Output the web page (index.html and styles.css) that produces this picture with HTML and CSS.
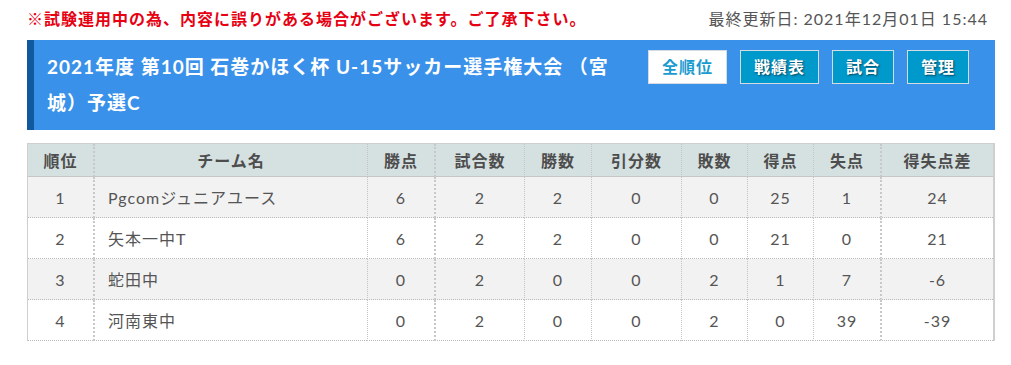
FILE: index.html
```html
<!DOCTYPE html>
<html lang="ja">
<head>
<meta charset="utf-8">
<title>順位表</title>
<link rel="stylesheet" href="styles.css">
</head>
<body>
<div class="page">
  <div class="topline">
    <p class="notice">※試験運用中の為、内容に誤りがある場合がございます。ご了承下さい。</p>
    <p class="updated">最終更新日: 2021年12月01日 15:44</p>
  </div>
  <div class="titlebar">
    <h1 class="title">2021年度 第10回 石巻かほく杯 U-15サッカー選手権大会 （宮城）予選C</h1>
    <nav class="tabs">
      <a class="tab tab-active">全順位</a>
      <a class="tab">戦績表</a>
      <a class="tab">試合</a>
      <a class="tab">管理</a>
    </nav>
  </div>
  <table class="standings">
    <colgroup>
      <col class="c-rank"><col class="c-team"><col class="c-pts"><col class="c-wide">
      <col class="c-pts"><col class="c-wide"><col class="c-num"><col class="c-num">
      <col class="c-pts"><col class="c-diff">
    </colgroup>
    <thead>
      <tr>
        <th>順位</th><th class="sep">チーム名</th><th>勝点</th><th class="sep">試合数</th><th>勝数</th><th>引分数</th><th>敗数</th><th>得点</th><th>失点</th><th class="sep">得失点差</th>
      </tr>
    </thead>
    <tbody>
      <tr class="odd">
        <td>1</td><td class="sep team">Pgcomジュニアユース</td><td>6</td><td class="sep">2</td><td>2</td><td>0</td><td>0</td><td>25</td><td>1</td><td class="sep">24</td>
      </tr>
      <tr>
        <td>2</td><td class="sep team">矢本一中T</td><td>6</td><td class="sep">2</td><td>2</td><td>0</td><td>0</td><td>21</td><td>0</td><td class="sep">21</td>
      </tr>
      <tr class="odd">
        <td>3</td><td class="sep team">蛇田中</td><td>0</td><td class="sep">2</td><td>0</td><td>0</td><td>2</td><td>1</td><td>7</td><td class="sep">-6</td>
      </tr>
      <tr>
        <td>4</td><td class="sep team">河南東中</td><td>0</td><td class="sep">2</td><td>0</td><td>0</td><td>2</td><td>0</td><td>39</td><td class="sep">-39</td>
      </tr>
    </tbody>
  </table>
</div>
</body>
</html>
```
FILE: styles.css
```css
* { box-sizing: border-box; }

body {
  margin: 0;
  background: #fff;
  font-family: Lato, "Noto Sans CJK JP", sans-serif;
  color: #555;
  letter-spacing: 1px;
}

.page {
  width: 968px;
  margin-left: 27px;
}

.topline {
  display: flex;
  justify-content: space-between;
  align-items: center;
  height: 40px;
  padding: 2px 7px 4px 0;
}

.notice {
  margin: 0;
  font-size: 16px;
  font-weight: bold;
  color: #e60012;
  line-height: 24px;
}

.updated {
  margin: 0;
  font-size: 16px;
  color: #555;
  line-height: 24px;
}

.titlebar {
  display: flex;
  align-items: flex-start;
  background: #3a91ea;
  border-left: 7px solid #10599f;
  padding: 9px 26px 9px 13px;
}

.title {
  flex: 1;
  margin: 0 30px 0 0;
  font-size: 19px;
  font-weight: bold;
  line-height: 36px;
  color: #fff;
}

.tabs {
  display: flex;
  gap: 13px;
  margin-top: 1px;
}

.tab {
  display: block;
  height: 34px;
  padding: 0 13px;
  border: 1px solid #d4dbe3;
  background: #0099cc;
  color: #fff;
  font-size: 16px;
  font-weight: bold;
  line-height: 32px;
  text-shadow: 1px 1px 2px rgba(0, 0, 0, 0.55);
}

.tab-active {
  background: #fff;
  color: #1a9bd0;
  text-shadow: none;
}

.standings {
  margin-top: 13px;
  width: 968px;
  table-layout: fixed;
  border-collapse: separate;
  border-spacing: 0;
  border-top: 1px solid #cfcfcf;
  border-left: 1px solid #cfcfcf;
  border-right: 2px solid #cfcfcf;
  font-size: 16px;
}

.c-rank { width: 65px; }
.c-team { width: 274px; }
.c-pts { width: 67px; }
.c-wide { width: 90px; }
.c-num { width: 66px; }
.c-diff { width: 113px; }

.standings th {
  height: 33px;
  padding: 0;
  background: #d5e0e0;
  border-bottom: 1px solid #c6c6c6;
  font-weight: bold;
  color: #4d4d4d;
  text-align: center;
}

.standings td {
  height: 41px;
  padding: 0;
  border-bottom: 1px dotted #bbb;
  text-align: center;
  color: #555;
}

.standings th + th,
.standings td + td {
  border-left: 1px dotted #c4c4c4;
}

.standings th.sep,
.standings td.sep {
  border-left: 2px dotted #c8c8c8;
}

.standings td.team {
  text-align: left;
  padding-left: 13px;
}

.standings tr.odd td {
  background: #f2f2f2;
}
```
